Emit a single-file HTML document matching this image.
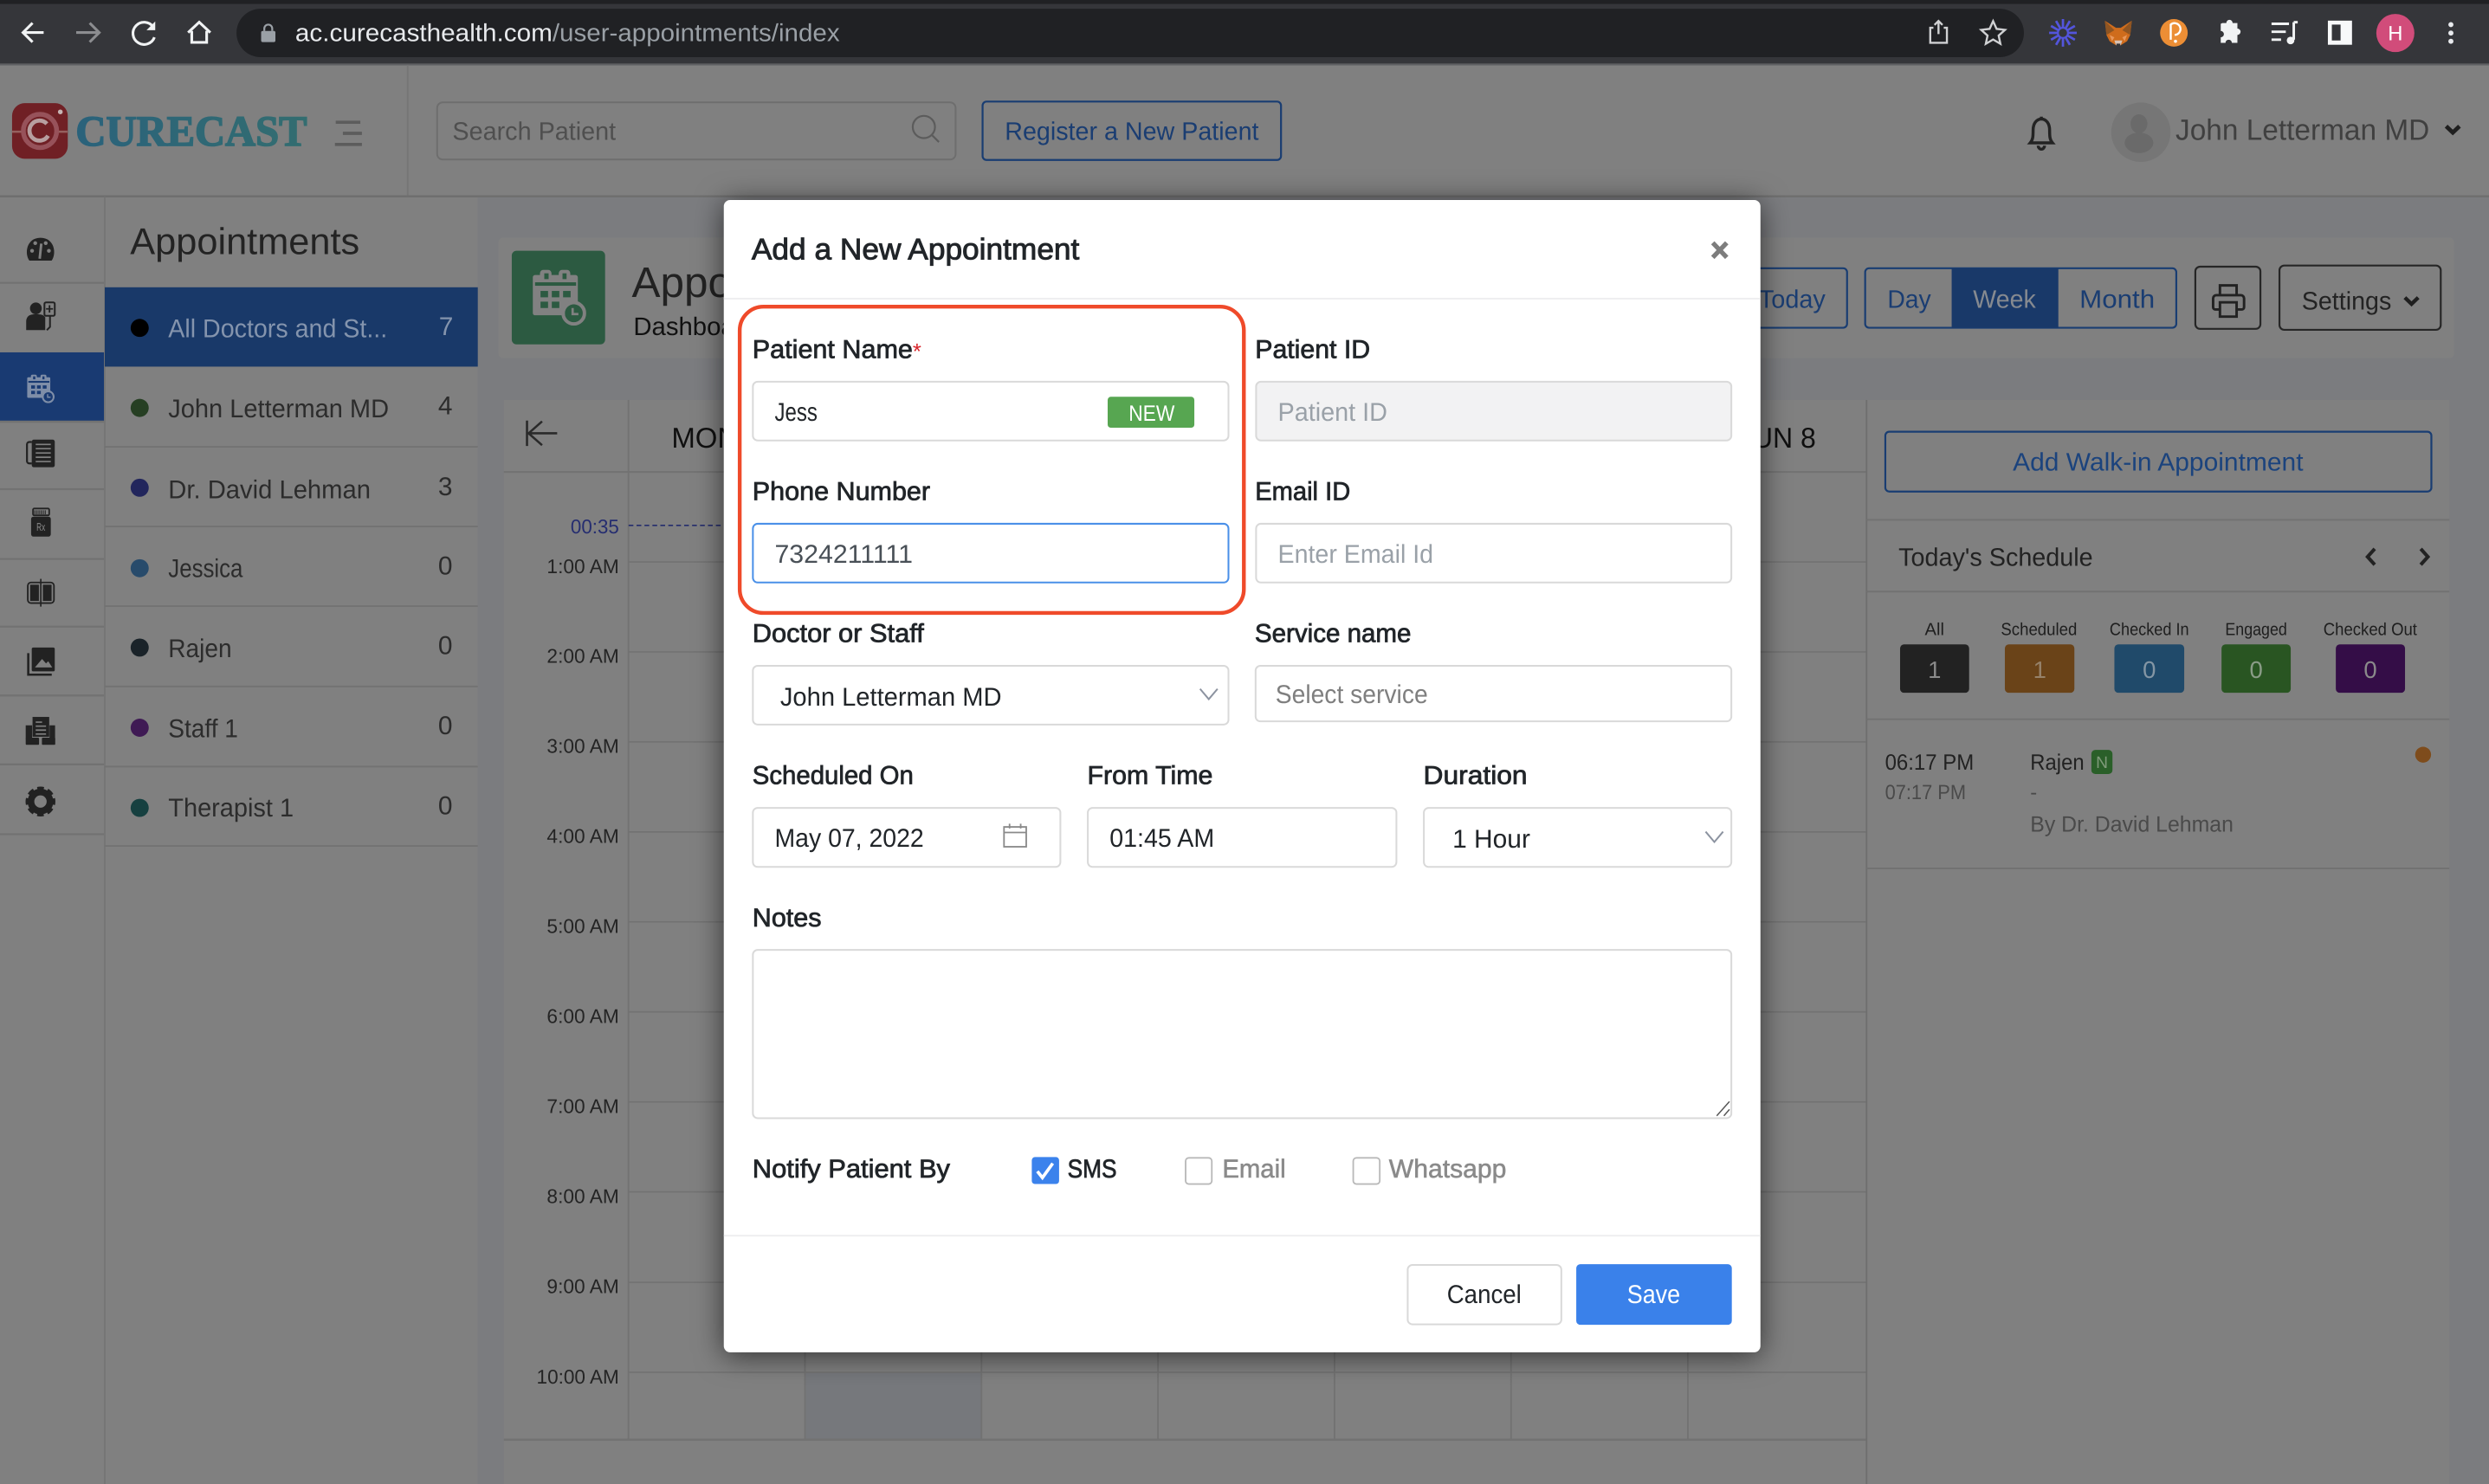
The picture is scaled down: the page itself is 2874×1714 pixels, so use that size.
<!DOCTYPE html>
<html lang="en">
<head>
<meta charset="utf-8">
<title>Add a New Appointment</title>
<style>
html,body{margin:0;padding:0;background:#808080;width:2874px;height:1714px;overflow:hidden}
svg{display:block}
text{font-family:"Liberation Sans",Arial,sans-serif;font-size:16px;fill:#2c2c2c;text-rendering:geometricPrecision;white-space:pre}
.li{font-size:16.3px;fill:#2c2c2c}
.t{font-size:12.5px;fill:#242424}
.lab{font-size:16.3px;fill:#212529;stroke:#212529;stroke-width:.42px}
.val{font-size:16.3px;fill:#212529}
.ph{font-size:16.3px;fill:#9aa1a8}
.st{font-size:11px;fill:#1e1e1e;text-anchor:middle}
.num{font-size:15px;fill:#8a8a8a;text-anchor:middle}
.g{fill:#727272}
</style>
</head>
<body>
<svg xmlns="http://www.w3.org/2000/svg" width="2874" height="1714" viewBox="0 0 1568 935" preserveAspectRatio="none">
<defs>
<linearGradient id="lg" x1="0" x2="1" y1="0" y2="0"><stop offset="0" stop-color="#2a627b"/><stop offset="1" stop-color="#336d70"/></linearGradient>
<filter id="sh" x="-10%" y="-10%" width="120%" height="120%"><feDropShadow dx="0" dy="2" stdDeviation="9" flood-color="#000" flood-opacity=".62"/></filter>
<symbol id="cal" viewBox="0 0 185 193">
<path fill="currentColor" d="M8 18h17v-6a12 12 0 0 1 12-12h16a12 12 0 0 1 12 12v6h25v-6a12 12 0 0 1 12-12h16a12 12 0 0 1 12 12v6h18a8 8 0 0 1 8 8v131H8a8 8 0 0 1-8-8V26a8 8 0 0 1 8-8z"/>
<g style="fill:var(--bg)">
<rect x="40" y="12" width="15" height="20"/><rect x="103" y="12" width="14" height="20"/>
<rect x="8" y="43" width="142" height="12"/>
<rect x="27" y="73" width="26" height="22"/><rect x="66" y="73" width="26" height="22"/><rect x="105" y="73" width="26" height="22"/>
<rect x="27" y="110" width="26" height="22"/><rect x="66" y="110" width="26" height="22"/>
<circle cx="142" cy="150" r="31"/>
</g>
<circle cx="142" cy="150" r="37" fill="none" stroke="currentColor" stroke-width="12"/>
<path d="M138 132v21h20" fill="none" stroke="currentColor" stroke-width="8"/>
</symbol>
<line id="ray" x1="0" y1="-3.5" x2="0" y2="-8.7" stroke="#5355dc" stroke-width="1.5"/>
</defs>

<!-- page base -->
<rect width="1568" height="935" fill="#808080"/>

<!-- chrome -->
<rect width="1568" height="41" fill="#35363a"/>
<rect width="1568" height="2.5" fill="#202124"/>
<rect y="40" width="1568" height="1.2" fill="#5f6063"/>
<rect x="149" y="5.5" width="1126" height="30.5" rx="15.2" fill="#202124"/>
<g fill="none" stroke-width="1.7">
<path d="M27.5 20.5H15M20.5 14.5l-6 6 6 6" stroke="#f1f3f4"/>
<path d="M48 20.5h14M56.5 14.5l6 6-6 6" stroke="#8c8d90"/>
<path d="M96.5 17a7 7 0 1 0 .8 6.5" stroke="#f1f3f4"/>
<path d="M118.5 20.5L125.5 14l7 6.5M120.8 19.5v7.2h9.4v-7.2" stroke="#f1f3f4"/>
</g>
<path d="M97.8 13.5v5.5h-5.5z" fill="#f1f3f4"/>
<rect x="164.5" y="19.5" width="9" height="7" rx="1" fill="#9aa0a6"/>
<path d="M166.5 19.5v-1.5a2.5 2.5 0 0 1 5 0v1.5" fill="none" stroke="#9aa0a6" stroke-width="1.2"/>
<text x="186" y="26" textLength="162" lengthAdjust="spacingAndGlyphs" style="fill:#e8eaed;font-size:15.5px">ac.curecasthealth.com</text>
<text x="348" y="26" textLength="181" lengthAdjust="spacingAndGlyphs" style="fill:#9aa0a6;font-size:15.5px">/user-appointments/index</text>

<path d="M1218 17.5h-2v9.5h10.5v-9.5h-2M1221.2 21.5V13.5M1218.7 15.7l2.5-2.5 2.5 2.5" fill="none" stroke="#d0d1d3" stroke-width="1.3"/>
<path d="M1255.6 13.3l2.2 4.9 5.3.6-4 3.6 1.1 5.2-4.6-2.7-4.6 2.7 1.1-5.2-4-3.6 5.3-.6z" fill="none" stroke="#d0d1d3" stroke-width="1.3"/>
<g transform="translate(1299.6 20.7)">
<use href="#ray"/><use href="#ray" transform="rotate(30)"/><use href="#ray" transform="rotate(60)"/><use href="#ray" transform="rotate(90)"/><use href="#ray" transform="rotate(120)"/><use href="#ray" transform="rotate(150)"/><use href="#ray" transform="rotate(180)"/><use href="#ray" transform="rotate(210)"/><use href="#ray" transform="rotate(240)"/><use href="#ray" transform="rotate(270)"/><use href="#ray" transform="rotate(300)"/><use href="#ray" transform="rotate(330)"/>
<circle r="3.2" fill="none" stroke="#5355dc" stroke-width="1.2"/>
</g>
<!-- fox -->
<path d="M1326 13l7 4.5h3l7-4.5-1 9-2 4-4 2.5h-3l-4-2.5-2-4z" fill="#cf6c1c"/>
<path d="M1326 13l6 6-5 3zM1343 13l-6 6 5 3z" fill="#8f5522"/>
<path d="M1329 22l3 1.5-1.5 2.5zM1340 22l-3 1.5 1.5 2.5z" fill="#e8975a"/>
<path d="M1332 25.5h5l-1 3h-3z" fill="#d7c1b3"/>
<path d="M1333.3 27.5h2.4v1.3h-2.4z" fill="#35363a"/>
<!-- p -->
<circle cx="1369.5" cy="20.7" r="8.7" fill="#ec8e35"/>
<path d="M1367.5 25V15.5a3.7 3.7 0 1 1 2.5 6.5" fill="none" stroke="#fff" stroke-width="1.3"/>
<circle cx="1370.5" cy="26" r="1" fill="#fff"/>
<!-- puzzle -->
<path d="M1400 15.5h2.5a2 2 0 1 1 4 0h3v3.5a2 2 0 1 1 0 4v5h-3.5a2 2 0 1 0-4 0H1399v-3.5a2 2 0 1 0 0-4V16z" fill="#f1f3f4" transform="translate(0 -1)"/>
<!-- media -->
<path d="M1431 15h11M1431 20h9M1431 25h6" stroke="#f1f3f4" stroke-width="1.6" fill="none"/>
<path d="M1445 14v11" stroke="#f1f3f4" stroke-width="1.6"/><path d="M1445 14h2.5" stroke="#f1f3f4" stroke-width="1.6"/>
<circle cx="1443" cy="25.5" r="2.4" fill="#f1f3f4"/>
<!-- sidebar icon -->
<rect x="1466.5" y="13" width="15.2" height="15.2" fill="#f8f9fa"/>
<rect x="1469" y="15.5" width="5.5" height="10" fill="#35363a"/>
<circle cx="1509" cy="20.8" r="12" fill="#d14c7a"/>
<text x="1509" y="25.5" text-anchor="middle" style="fill:#fff;font-size:13px">H</text>
<circle cx="1544" cy="15.5" r="1.6" fill="#e8eaed"/><circle cx="1544" cy="20.8" r="1.6" fill="#e8eaed"/><circle cx="1544" cy="26" r="1.6" fill="#e8eaed"/>

<!-- app header -->
<rect x="256.3" y="41" width="1" height="83" fill="#757575"/>
<rect y="123" width="1568" height="1.4" fill="#6f6f6f"/>
<rect x="7.6" y="65" width="35.1" height="35" rx="8" fill="#702025"/>
<path d="M7.6 83h6M36.5 83h6" stroke="#96605f" stroke-width="1.4"/>
<circle cx="25.2" cy="82.5" r="10.5" fill="none" stroke="#97525a" stroke-width="3"/>
<path d="M29.5 78a6.3 6.3 0 1 0 .8 7.5" fill="none" stroke="#b79fa0" stroke-width="2.6"/>
<circle cx="38" cy="70.5" r="1.5" fill="#c6b4b4"/>
<text x="47.7" y="91.6" textLength="145.7" lengthAdjust="spacingAndGlyphs" style="font-family:'Liberation Serif',serif;font-weight:700;font-size:27px;fill:url(#lg);stroke:url(#lg);stroke-width:.9px">CURECAST</text>
<path d="M212 77h15.5M216.5 84h12M211.5 91h17" stroke="#5c5c5c" stroke-width="2" fill="none" transform="translate(-.5 0)"/>
<rect x="275.4" y="64.5" width="326.6" height="36" rx="3.5" fill="none" stroke="#6e6e6e" stroke-width="1.1"/>
<text x="285" y="88" textLength="103" lengthAdjust="spacingAndGlyphs" style="fill:#4f4f4f">Search Patient</text>
<circle cx="582" cy="80" r="7" fill="none" stroke="#5c5c5c" stroke-width="1.2"/><path d="M587 85l4.5 4.5" stroke="#5c5c5c" stroke-width="1.2"/>
<rect x="619" y="64" width="188" height="36.8" rx="2.5" fill="none" stroke="#193d72" stroke-width="1.2"/>
<text x="633" y="88" textLength="160" lengthAdjust="spacingAndGlyphs" style="fill:#1a3d72">Register a New Patient</text>
<path d="M1279 90c1.7-2 1.8-4 1.8-8 0-4 2-7 5.2-7s5.2 3 5.2 7c0 4 .1 6 1.8 8zM1284 91.8a2 2.2 0 0 0 4 0M1286 73.5v1.5" fill="#808080" stroke="#232323" stroke-width="1.9"/>
<circle cx="1348.7" cy="83.3" r="18.7" fill="#767676"/>
<ellipse cx="1347.5" cy="78" rx="5.3" ry="6" fill="#6a6a6a"/><ellipse cx="1347.5" cy="90" rx="9" ry="6.5" fill="#6a6a6a"/>
<text x="1370.5" y="88" textLength="160" lengthAdjust="spacingAndGlyphs" style="font-size:18.5px;fill:#404040">John Letterman MD</text>
<path d="M1541 79.5l4.2 4 4.2-4" fill="none" stroke="#1f1f1f" stroke-width="2.6"/>

<!-- main background -->
<rect x="301" y="124.4" width="1267" height="811" fill="#7b7c7f"/>

<!-- icon rail -->
<rect x="65.5" y="124" width="1" height="811" fill="#757575"/>
<g class="g">
<rect y="177.6" width="65.5" height="1.2"/><rect y="264.8" width="65.5" height="1.6"/><rect y="307.6" width="65.5" height="1.2"/><rect y="351.6" width="65.5" height="1.2"/><rect y="394.2" width="65.5" height="1.2"/><rect y="437.6" width="65.5" height="1.2"/><rect y="481" width="65.5" height="1.2"/><rect y="525" width="65.5" height="1.2"/>
</g>
<rect y="222" width="65.5" height="43" fill="#193a72"/>
<!-- gauge -->
<path d="M18.5 164.2C15.3 160 16.5 149.8 25.5 149.8S35.7 160 32.5 164.2z" fill="#222"/>
<g fill="#808080"><circle cx="20.2" cy="158" r="1.2"/><circle cx="22.2" cy="153.2" r="1.2"/><circle cx="28.8" cy="153.2" r="1.2"/><circle cx="30.8" cy="158" r="1.2"/></g>
<path d="M25 163l1-9.5" stroke="#808080" stroke-width="1.6"/>
<!-- doctor -->
<circle cx="22.6" cy="194.3" r="3.7" fill="#222"/>
<path d="M16.5 208v-5.5q0-4.5 5.5-4.5h2q3.5 0 4.5 2v8z" fill="#222"/>
<rect x="28" y="190.5" width="6.5" height="8.5" rx="1" fill="#808080" stroke="#222" stroke-width="1.1"/>
<path d="M31.2 192.3v4.6M29 194.6h4.4" stroke="#222" stroke-width="1"/>
<path d="M31.5 199v7l-2 2" stroke="#222" stroke-width="1.1" fill="none"/>
<!-- calendar active -->
<use href="#cal" x="17" y="236" width="17.5" height="18" style="color:#7f8ea8;--bg:#193a72"/>
<!-- book -->
<path d="M20 278.5h-1.5a1.5 1.5 0 0 0-1.5 1.5v10.5a1.5 1.5 0 0 0 1.5 1.5H20" fill="none" stroke="#222" stroke-width="1.2"/>
<rect x="20" y="277" width="14.5" height="17.4" rx="1.3" fill="#222"/>
<path d="M22.5 280h9.5M22.5 282.7h9.5M22.5 285.4h9.5M22.5 288.1h9.5M22.5 290.8h9.5" stroke="#808080" stroke-width=".9"/>
<!-- bottle -->
<rect x="20.8" y="320.4" width="10.2" height="4.3" rx=".8" fill="#808080" stroke="#222" stroke-width="1"/>
<path d="M22 321.5v2.5M23.3 321.5v2.5M24.6 321.5v2.5M25.9 321.5v2.5M27.2 321.5v2.5M28.5 321.5v2.5" stroke="#222" stroke-width=".6"/>
<rect x="19.6" y="325.5" width="12.4" height="12.6" rx="1.5" fill="#222"/>
<text x="23" y="334.5" textLength="5.5" lengthAdjust="spacingAndGlyphs" style="font-size:7px;fill:#8c8c8c">Rx</text>
<!-- open book -->
<rect x="17.5" y="367" width="16.5" height="13" rx="2" fill="none" stroke="#222" stroke-width="1"/>
<rect x="19" y="368.4" width="5.5" height="10.2" fill="#222"/><rect x="27" y="368.4" width="5.5" height="10.2" fill="#222"/>
<path d="M25.7 364.7v17.5" stroke="#222" stroke-width=".9"/>
<!-- images -->
<path d="M17.8 411.5v13.6h14.8" fill="none" stroke="#222" stroke-width="1.4"/>
<rect x="20" y="408" width="14.5" height="15" rx="1" fill="#222"/>
<path d="M22 420.5l4.5-5.3 2.5 2.8 1.4-1.4 2.5 3.9z" fill="#808080"/>
<!-- docs -->
<rect x="20.5" y="451.7" width="10.5" height="12.5" fill="#222"/>
<path d="M22.5 455h4M22.5 457.5h6.5M22.5 460h6.5M22.5 462.5h6.5" stroke="#808080" stroke-width=".9"/>
<rect x="16.2" y="457" width="4" height="8.5" fill="#222"/><rect x="31.2" y="457" width="3.5" height="8.5" fill="#222"/>
<rect x="16.2" y="464.8" width="8.4" height="4.5" rx=".6" fill="#222"/><rect x="26.4" y="464.8" width="8.4" height="4.5" rx=".6" fill="#222"/>
<!-- gear -->
<circle cx="25.5" cy="505" r="6" fill="none" stroke="#222" stroke-width="4.2"/>
<circle cx="25.5" cy="505" r="8.2" fill="none" stroke="#222" stroke-width="2.4" stroke-dasharray="4 2.44" stroke-dashoffset="2"/>

<!-- list panel -->
<text x="82" y="160" textLength="144.5" lengthAdjust="spacingAndGlyphs" style="font-size:23.5px;fill:#232323">Appointments</text>
<rect x="66" y="181" width="235" height="50" fill="#193969"/>
<g class="g">
<rect x="66" y="281" width="235" height="1"/><rect x="66" y="331.2" width="235" height="1"/><rect x="66" y="381.4" width="235" height="1"/><rect x="66" y="432" width="235" height="1"/><rect x="66" y="482.5" width="235" height="1"/><rect x="66" y="532.5" width="235" height="1"/>
</g>
<circle cx="88" cy="206.6" r="5.7" fill="#000"/><circle cx="88" cy="257" r="5.7" fill="#263f23"/><circle cx="88" cy="307.3" r="5.7" fill="#22265c"/><circle cx="88" cy="358" r="5.7" fill="#284b6b"/><circle cx="88" cy="408" r="5.7" fill="#1a2329"/><circle cx="88" cy="458.5" r="5.7" fill="#3f1a54"/><circle cx="88" cy="509" r="5.7" fill="#164040"/>
<text class="li" x="106" y="212.5" textLength="138" lengthAdjust="spacingAndGlyphs" style="fill:#8494ad">All Doctors and St...</text>
<text class="li" x="106" y="263" textLength="139" lengthAdjust="spacingAndGlyphs">John Letterman MD</text>
<text class="li" x="106" y="314" textLength="127.5" lengthAdjust="spacingAndGlyphs">Dr. David Lehman</text>
<text class="li" x="106" y="363.5" textLength="47" lengthAdjust="spacingAndGlyphs">Jessica</text>
<text class="li" x="106" y="414" textLength="40" lengthAdjust="spacingAndGlyphs">Rajen</text>
<text class="li" x="106" y="464.5" textLength="44" lengthAdjust="spacingAndGlyphs">Staff 1</text>
<text class="li" x="106" y="514.5" textLength="79" lengthAdjust="spacingAndGlyphs">Therapist 1</text>
<text class="li" x="276.5" y="211" style="fill:#8494ad">7</text>
<text class="li" x="276" y="261">4</text>
<text class="li" x="276" y="312">3</text>
<text class="li" x="276" y="362">0</text>
<text class="li" x="276" y="412">0</text>
<text class="li" x="276" y="462.5">0</text>
<text class="li" x="276" y="513">0</text>

<!-- top toolbar card -->
<rect x="314" y="149.7" width="1232" height="76" rx="3" fill="#808080"/>
<rect x="322.4" y="158" width="58.8" height="59" rx="3" fill="#2c5a41"/>
<use href="#cal" x="335.6" y="170" width="33.7" height="35.2" style="color:#818181;--bg:#2c5a41"/>
<text x="398" y="187" style="font-size:27px;fill:#222">Appointments</text>
<text x="399" y="211" style="font-size:16px;fill:#111">Dashboard</text>
<rect x="1100" y="169" width="63.6" height="37.5" rx="2.5" fill="none" stroke="#193d72" stroke-width="1.2"/>
<text x="1108" y="194" textLength="42" lengthAdjust="spacingAndGlyphs" style="fill:#1a3d72">Today</text>
<rect x="1175" y="169" width="196" height="37.5" rx="2.5" fill="none" stroke="#193d72" stroke-width="1.2"/>
<rect x="1229.5" y="169" width="67.2" height="37.5" fill="#193969"/>
<text x="1189" y="194" textLength="27.5" lengthAdjust="spacingAndGlyphs" style="fill:#1a3d72">Day</text>
<text x="1243" y="194" textLength="39.5" lengthAdjust="spacingAndGlyphs" style="fill:#868a90">Week</text>
<text x="1310" y="194" textLength="47.5" lengthAdjust="spacingAndGlyphs" style="fill:#1a3d72">Month</text>
<rect x="1383" y="168" width="41" height="39.2" rx="3" fill="none" stroke="#262626" stroke-width="1.2"/>
<path d="M1398.5 186v-6.2h10.5v6.2M1398.5 195h-2.8a1.5 1.5 0 0 1-1.5-1.5V188a2 2 0 0 1 2-2h15.5a2 2 0 0 1 2 2v5.5a1.5 1.5 0 0 1-1.5 1.5H1409M1398.5 190.5H1409v9h-10.5z" fill="none" stroke="#222" stroke-width="1.6"/>
<rect x="1436" y="167.3" width="101.6" height="40.5" rx="3" fill="none" stroke="#262626" stroke-width="1.2"/>
<text x="1450" y="195" textLength="56.5" lengthAdjust="spacingAndGlyphs" style="fill:#232323">Settings</text>
<path d="M1515 187.5l4.2 4 4.2-4" fill="none" stroke="#1f1f1f" stroke-width="2.4"/>

<!-- calendar -->
<rect x="317.4" y="252" width="858.6" height="683" fill="#808080"/>
<rect x="507" y="864.5" width="111" height="42.5" fill="#76787c"/>
<g class="g">
<rect x="317.4" y="296.8" width="858.6" height="1.1"/>
<rect x="395.4" y="252" width="1" height="655"/><rect x="506.6" y="297" width="1" height="610"/><rect x="617.8" y="297" width="1" height="610"/><rect x="729" y="297" width="1" height="610"/><rect x="840.2" y="297" width="1" height="610"/><rect x="951.4" y="297" width="1" height="610"/><rect x="1062.8" y="297" width="1" height="610"/>
<rect x="396" y="353.6" width="780" height=".9"/><rect x="396" y="410.3" width="780" height=".9"/><rect x="396" y="467" width="780" height=".9"/><rect x="396" y="523.7" width="780" height=".9"/><rect x="396" y="580.4" width="780" height=".9"/><rect x="396" y="637.1" width="780" height=".9"/><rect x="396" y="693.8" width="780" height=".9"/><rect x="396" y="750.5" width="780" height=".9"/><rect x="396" y="807.5" width="780" height=".9"/><rect x="396" y="864.2" width="780" height=".9"/>
<rect x="317.4" y="906.4" width="858.6" height="1.4"/>
</g>
<path d="M332 265v16M351 273h-18.5M341.5 265.5l-8.5 7.5 8.5 7.5" fill="none" stroke="#2a2a2a" stroke-width="1.4"/>
<text x="423" y="282" style="font-size:18px;fill:#0f0f0f">MON 2</text>
<text x="1092.5" y="282" textLength="51.5" lengthAdjust="spacingAndGlyphs" style="font-size:18px;fill:#0f0f0f">SUN 8</text>
<text x="359.5" y="336" textLength="30.5" lengthAdjust="spacingAndGlyphs" style="font-size:12.5px;fill:#252d70">00:35</text>
<path d="M396 331h60" stroke="#242c6c" stroke-width=".9" stroke-dasharray="3 2"/>
<text class="t" x="344.5" y="361" textLength="45.5" lengthAdjust="spacingAndGlyphs">1:00 AM</text>
<text class="t" x="344.5" y="417.7" textLength="45.5" lengthAdjust="spacingAndGlyphs">2:00 AM</text>
<text class="t" x="344.5" y="474.4" textLength="45.5" lengthAdjust="spacingAndGlyphs">3:00 AM</text>
<text class="t" x="344.5" y="531.1" textLength="45.5" lengthAdjust="spacingAndGlyphs">4:00 AM</text>
<text class="t" x="344.5" y="587.8" textLength="45.5" lengthAdjust="spacingAndGlyphs">5:00 AM</text>
<text class="t" x="344.5" y="644.5" textLength="45.5" lengthAdjust="spacingAndGlyphs">6:00 AM</text>
<text class="t" x="344.5" y="701.2" textLength="45.5" lengthAdjust="spacingAndGlyphs">7:00 AM</text>
<text class="t" x="344.5" y="757.9" textLength="45.5" lengthAdjust="spacingAndGlyphs">8:00 AM</text>
<text class="t" x="344.5" y="814.6" textLength="45.5" lengthAdjust="spacingAndGlyphs">9:00 AM</text>
<text class="t" x="338" y="871.6" textLength="52" lengthAdjust="spacingAndGlyphs">10:00 AM</text>

<!-- right panel -->
<rect x="1176" y="252" width="367" height="683" fill="#808080"/>
<rect x="1175.4" y="252" width="1" height="683" fill="#6e6e6e"/>
<rect x="1187.7" y="272" width="344" height="37.7" rx="2.5" fill="none" stroke="#193d72" stroke-width="1.2"/>
<text x="1268" y="296.5" textLength="183" lengthAdjust="spacingAndGlyphs" style="fill:#1b437d">Add Walk-in Appointment</text>
<g class="g"><rect x="1176" y="327" width="367" height="1.1"/><rect x="1176" y="372.2" width="367" height="1.1"/><rect x="1176" y="452.6" width="367" height="1.1"/><rect x="1176" y="546.6" width="367" height="1.1"/></g>
<text x="1196" y="356.5" textLength="122.5" lengthAdjust="spacingAndGlyphs" style="fill:#222">Today's Schedule</text>
<path d="M1496 345.8l-4.5 5 4.5 5M1525 345.8l4.5 5-4.5 5" fill="none" stroke="#222" stroke-width="2.2"/>
<text class="st" x="1218.7" y="400">All</text>
<text class="st" x="1284.5" y="400" textLength="48" lengthAdjust="spacingAndGlyphs" style="text-anchor:start" dx="-24">Scheduled</text>
<text class="st" x="1329" y="400" textLength="50" lengthAdjust="spacingAndGlyphs" style="text-anchor:start">Checked In</text>
<text class="st" x="1401.8" y="400" textLength="39" lengthAdjust="spacingAndGlyphs" style="text-anchor:start">Engaged</text>
<text class="st" x="1463.7" y="400" textLength="59" lengthAdjust="spacingAndGlyphs" style="text-anchor:start">Checked Out</text>
<rect x="1197" y="406" width="43.5" height="30.5" rx="2.5" fill="#222"/>
<rect x="1263" y="406" width="43.8" height="30.5" rx="2.5" fill="#6a4318"/>
<rect x="1332" y="406" width="44" height="30.5" rx="2.5" fill="#204a6a"/>
<rect x="1399.5" y="406" width="43.6" height="30.5" rx="2.5" fill="#295522"/>
<rect x="1471.5" y="406" width="43.6" height="30.5" rx="2.5" fill="#340d47"/>
<text class="num" x="1218.7" y="427">1</text>
<text class="num" x="1285" y="427" style="fill:#96826a">1</text>
<text class="num" x="1354" y="427" style="fill:#8496a4">0</text>
<text class="num" x="1421.3" y="427" style="fill:#8a9c87">0</text>
<text class="num" x="1493.3" y="427">0</text>
<text x="1187.5" y="485" textLength="56" lengthAdjust="spacingAndGlyphs" style="font-size:14px;fill:#222">06:17 PM</text>
<text x="1187.5" y="503.5" textLength="51" lengthAdjust="spacingAndGlyphs" style="font-size:13px;fill:#4a4a4a">07:17 PM</text>
<text x="1279" y="485" textLength="34" lengthAdjust="spacingAndGlyphs" style="font-size:14px;fill:#222">Rajen</text>
<rect x="1317.5" y="472.5" width="13.3" height="15.2" rx="2.5" fill="#2a5f29"/>
<text x="1324.2" y="484" text-anchor="middle" style="font-size:10.5px;fill:#7f9a7a">N</text>
<text x="1279" y="503.5" style="font-size:13px;fill:#4a4a4a">-</text>
<text x="1279" y="524" textLength="128" lengthAdjust="spacingAndGlyphs" style="font-size:14px;fill:#4a4a4a">By Dr. David Lehman</text>
<circle cx="1526.5" cy="475.5" r="5" fill="#7e4c1c"/>

<!-- modal -->
<rect x="456" y="126" width="653" height="726" rx="4" fill="#fff" filter="url(#sh)"/>
<rect x="456" y="187.6" width="653" height="1.1" fill="#eeeef0"/>
<rect x="456" y="778" width="653" height="1.1" fill="#eeeef0"/>
<text class="lab" x="473.5" y="163.5" textLength="206.5" lengthAdjust="spacingAndGlyphs" style="font-size:18.8px;stroke-width:.5px">Add a New Appointment</text>
<path d="M1079 153l8.8 9.2M1087.8 153l-8.8 9.2" stroke="#7d7d7d" stroke-width="2.9" fill="none"/>

<text class="lab" x="474" y="225.6" textLength="101" lengthAdjust="spacingAndGlyphs">Patient Name</text>
<text x="575" y="226" style="fill:#d8242a;font-size:14px">*</text>
<rect x="474.3" y="240.5" width="299.6" height="37" rx="3" fill="#fff" stroke="#d9d9d9" stroke-width="1.1"/>
<text class="val" x="488" y="265" textLength="27" lengthAdjust="spacingAndGlyphs">Jess</text>
<rect x="697.8" y="250" width="54.6" height="19.5" rx="2" fill="#57a651"/>
<text x="711" y="265" textLength="29" lengthAdjust="spacingAndGlyphs" style="font-size:14px;fill:#fff">NEW</text>

<text class="lab" x="474" y="315" textLength="112" lengthAdjust="spacingAndGlyphs">Phone Number</text>
<rect x="474.3" y="330" width="299.6" height="37" rx="3" fill="#fff" stroke="#4a90e8" stroke-width="1.1"/>
<text class="val" x="488" y="354.5" textLength="87" lengthAdjust="spacingAndGlyphs" style="fill:#495057">7324211111</text>

<rect x="466" y="193.2" width="317.6" height="193" rx="15" fill="none" stroke="#ef4a2a" stroke-width="2.4"/>

<text class="lab" x="790.7" y="225.6" textLength="72.5" lengthAdjust="spacingAndGlyphs">Patient ID</text>
<rect x="791.3" y="240.5" width="299.4" height="37" rx="3" fill="#f2f2f3" stroke="#d9d9d9" stroke-width="1.1"/>
<text class="ph" x="805" y="265" textLength="69" lengthAdjust="spacingAndGlyphs">Patient ID</text>
<text class="lab" x="790.7" y="315" textLength="60" lengthAdjust="spacingAndGlyphs">Email ID</text>
<rect x="791.3" y="330" width="299.4" height="37" rx="3" fill="#fff" stroke="#d9d9d9" stroke-width="1.1"/>
<text class="ph" x="805" y="354.5" textLength="98" lengthAdjust="spacingAndGlyphs">Enter Email Id</text>

<text class="lab" x="474" y="404.6" textLength="108" lengthAdjust="spacingAndGlyphs">Doctor or Staff</text>
<rect x="474.3" y="419.5" width="299.6" height="37" rx="3" fill="#fff" stroke="#d9d9d9" stroke-width="1.1"/>
<text class="val" x="491.5" y="444.5" textLength="139.5" lengthAdjust="spacingAndGlyphs">John Letterman MD</text>
<path d="M756 434l5.5 6.5 5.5-6.5" fill="none" stroke="#8c93a0" stroke-width="1.1"/>
<text class="lab" x="790.5" y="404.6" textLength="98.5" lengthAdjust="spacingAndGlyphs">Service name</text>
<rect x="791" y="419.5" width="299.7" height="35" rx="3" fill="#fff" stroke="#d9d9d9" stroke-width="1.1"/>
<text x="803.5" y="443" textLength="96" lengthAdjust="spacingAndGlyphs" style="fill:#7f7f7f;font-size:16.3px">Select service</text>

<text class="lab" x="474" y="494" textLength="101.5" lengthAdjust="spacingAndGlyphs">Scheduled On</text>
<text class="lab" x="685" y="494" textLength="79" lengthAdjust="spacingAndGlyphs">From Time</text>
<text class="lab" x="896.7" y="494" textLength="65.5" lengthAdjust="spacingAndGlyphs">Duration</text>
<rect x="474.3" y="509" width="193.7" height="37.2" rx="3" fill="#fff" stroke="#d9d9d9" stroke-width="1.1"/>
<text class="val" x="488" y="533.5" textLength="94" lengthAdjust="spacingAndGlyphs">May 07, 2022</text>
<rect x="632.5" y="521" width="14" height="12.5" fill="none" stroke="#8a8a8a" stroke-width="1"/>
<path d="M632.5 524.5h14M636 519v3M643 519v3" stroke="#8a8a8a" stroke-width="1" fill="none"/>
<rect x="685.3" y="509" width="194.4" height="37.2" rx="3" fill="#fff" stroke="#d9d9d9" stroke-width="1.1"/>
<text class="val" x="699" y="533.5" textLength="66" lengthAdjust="spacingAndGlyphs">01:45 AM</text>
<rect x="897" y="509" width="193.7" height="37.2" rx="3" fill="#fff" stroke="#d9d9d9" stroke-width="1.1"/>
<text class="val" x="915" y="534" textLength="49" lengthAdjust="spacingAndGlyphs">1 Hour</text>
<path d="M1074.5 524l5.5 6.5 5.5-6.5" fill="none" stroke="#8c93a0" stroke-width="1.1"/>

<text class="lab" x="474" y="583.6" textLength="43.5" lengthAdjust="spacingAndGlyphs">Notes</text>
<rect x="474.3" y="598.5" width="616.4" height="106" rx="3" fill="#fff" stroke="#d9d9d9" stroke-width="1.1"/>
<path d="M1081.5 703l8-9M1086 703l3.5-4" stroke="#555" stroke-width=".8" fill="none"/>

<text class="lab" x="474" y="742" textLength="124.5" lengthAdjust="spacingAndGlyphs">Notify Patient By</text>
<rect x="650" y="729" width="17.2" height="17" rx="2" fill="#3b82ec"/>
<path d="M653.5 738l3.2 4 6.5-9" fill="none" stroke="#fff" stroke-width="2"/>
<text class="lab" x="672.5" y="742" textLength="31" lengthAdjust="spacingAndGlyphs">SMS</text>
<rect x="746.9" y="729.5" width="16.5" height="16.5" rx="2" fill="#fff" stroke="#b9b9b9" stroke-width="1"/>
<text x="770" y="742" textLength="40" lengthAdjust="spacingAndGlyphs" style="fill:#8a8a8a;stroke:#8a8a8a;stroke-width:.3px;font-size:16.3px">Email</text>
<rect x="852.5" y="729.5" width="16.7" height="16.5" rx="2" fill="#fff" stroke="#b9b9b9" stroke-width="1"/>
<text x="875" y="742" textLength="74" lengthAdjust="spacingAndGlyphs" style="fill:#8a8a8a;stroke:#8a8a8a;stroke-width:.3px;font-size:16.3px">Whatsapp</text>

<rect x="886.8" y="797" width="96.8" height="37.4" rx="3" fill="#fff" stroke="#d9d9d9" stroke-width="1.1"/>
<text x="911.5" y="821" textLength="47" lengthAdjust="spacingAndGlyphs" style="fill:#212529;font-size:16.3px">Cancel</text>
<rect x="993" y="796.5" width="98" height="38.2" rx="2.5" fill="#3a81ea"/>
<text x="1025" y="821" textLength="33.5" lengthAdjust="spacingAndGlyphs" style="fill:#fff;font-size:16.3px">Save</text>
</svg>
</body>
</html>
